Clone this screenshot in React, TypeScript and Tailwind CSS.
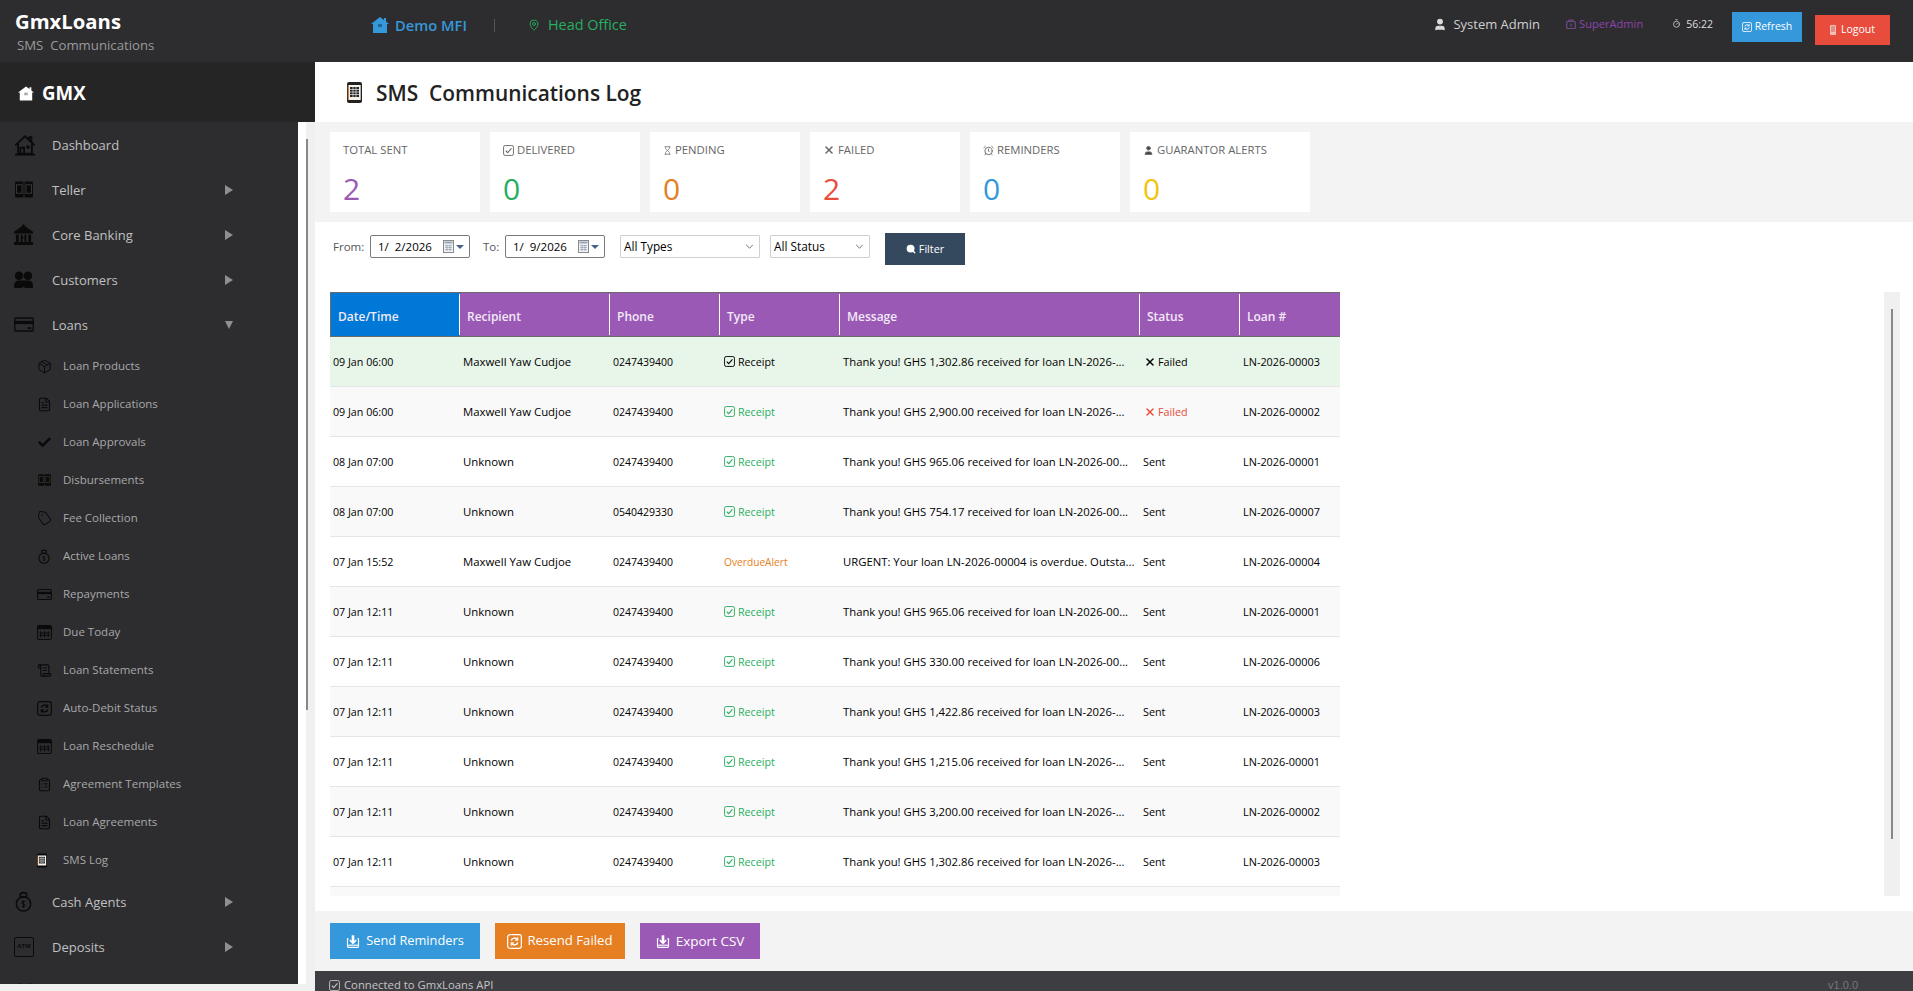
import React from "react";
import { Package, FileText, Check, Tag, ScrollText, ClipboardList, X, User, MapPin, Search, Hourglass, AlarmClock, Timer } from "lucide-react";

const FONT = "font-['Open_Sans','Noto_Sans',sans-serif]";

function CheckBox({ className = "" }: { className?: string }) {
  return (
    <svg viewBox="0 0 12 12" className={className} fill="none" stroke="currentColor">
      <rect x="0.600" y="0.600" width="10.800" height="10.800" rx="1.800" strokeWidth="1" />
      <path d="M3 6.200l2.100 2.100L9.200 3.800" strokeWidth="1.200" />
    </svg>
  );
}
function HomeOutline({ className = "" }: { className?: string }) {
  return (
    <svg viewBox="0 0 24 24" className={className} fill="none" stroke="currentColor" strokeWidth="2">
      <path d="M1.500 12.500 12 2.500l10.500 10" />
      <path d="M16.500 6V3.500h2.500v5" />
      <path d="M4.500 11v10.500h15V11" />
      <path d="M7 22v-7h4v7" />
      <rect x="13.500" y="12.500" width="3.500" height="3.500" fill="currentColor" stroke="none" />
      <path d="M1 22.500h22" />
    </svg>
  );
}
function HomeSolid({ className = "" }: { className?: string }) {
  return (
    <svg viewBox="0 0 18 16" className={className} fill="currentColor">
      <path d="M9 0 0 7h2v9h14V7h2l-3-2.400V1h-2v2z" />
      <rect x="7" y="7" width="4" height="3" fill="#00000055" />
    </svg>
  );
}
function TellerIcon({ className = "" }: { className?: string }) {
  return (
    <svg viewBox="0 0 20 18" className={className} fill="none">
      <rect x="0.500" y="0.500" width="9" height="17" rx="1" fill="#0a0a0a" />
      <rect x="10.500" y="0.500" width="9" height="17" rx="1" fill="#0a0a0a" />
      <rect x="2" y="4" width="6" height="9" fill="none" stroke="#3a3a3a" />
      <rect x="12" y="4" width="6" height="9" fill="none" stroke="#3a3a3a" />
    </svg>
  );
}
function BankIcon({ className = "" }: { className?: string }) {
  return (
    <svg viewBox="0 0 20 22" className={className} fill="currentColor">
      <path d="M10 0l2 2.500L20 8v2H0V8l8-5.500z" />
      <path d="M2 11h3v8H2zM7 11h2v3H7zM11 11h2v3h-2zM15 11h3v8h-3zM7 14h6v1H7zM7 15h2v4H7zM11 15h2v4h-2z" />
      <rect x="0" y="19" width="20" height="3" />
    </svg>
  );
}
function PeopleIcon({ className = "" }: { className?: string }) {
  return (
    <svg viewBox="0 0 20 18" className={className} fill="currentColor">
      <circle cx="5.300" cy="5" r="4.500" />
      <circle cx="14.700" cy="5" r="4.500" />
      <path d="M0 18v-3c0-3 2-5 5-5h10c3 0 5 2 5 5v3h-9v-1H9v1z" />
    </svg>
  );
}
function CardIcon({ className = "" }: { className?: string }) {
  return (
    <svg viewBox="0 0 22 16" className={className} fill="none" stroke="currentColor" strokeWidth="1.500">
      <rect x="0.800" y="0.800" width="20.400" height="14.400" rx="1.500" />
      <rect x="1" y="4" width="20" height="3.500" fill="currentColor" stroke="none" />
      <rect x="15" y="11" width="4" height="2" fill="currentColor" stroke="none" />
    </svg>
  );
}
function BagIcon({ className = "" }: { className?: string }) {
  return (
    <svg viewBox="0 0 20 22" className={className} fill="none" stroke="currentColor" strokeWidth="1.600">
      <circle cx="10" cy="13.500" r="7.500" />
      <path d="M7 6.500 6.500 3c2-1.500 5-1.500 7 0L13 6.500" />
      <path d="M7 6.500h6" />
      <path d="M12 11.500c-1-1-4-1-4 .8 0 2 4 1 4 3 0 1.800-3 1.800-4 .8M10 10v7.500" strokeWidth="1" />
    </svg>
  );
}
function CalIcon({ className = "" }: { className?: string }) {
  return (
    <svg viewBox="0 0 16 16" className={className} fill="none" stroke="#0a0a0a" strokeWidth="1.100">
      <rect x="0.600" y="0.600" width="14.800" height="14.800" rx="1.500" />
      <rect x="1" y="1" width="14" height="3.500" fill="#0a0a0a" stroke="none" />
      <path d="M4 6.500v7M8 6.500v7M12 6.500v7M2.500 8.500h11M2.500 11h11" strokeWidth="1" />
    </svg>
  );
}
function RefreshBox({ className = "" }: { className?: string }) {
  return (
    <svg viewBox="0 0 16 16" className={className} fill="none" stroke="currentColor" strokeWidth="1.300">
      <rect x="0.700" y="0.700" width="14.600" height="14.600" rx="2.500" />
      <path d="M4.500 7a3.700 3.700 0 0 1 6.500-1.200M11.500 9a3.700 3.700 0 0 1-6.500 1.200" strokeWidth="1.600" />
      <path d="M11.500 3.500v3h-3M4.500 12.500v-3h3" strokeWidth="1.200" />
    </svg>
  );
}
function PhoneGrid({ className = "", body = "#0a0a0a" }: { className?: string; body?: string }) {
  return (
    <svg viewBox="0 0 15 21" className={className}>
      <rect x="0" y="0" width="15" height="21" rx="2" fill={body} />
      <rect x="1.300" y="3" width="12.400" height="15" fill="#f5f0ea" />
      <path d="M1.200 3v15" stroke="#c8641e" strokeWidth="0.900" />
      <path d="M3 5h9v10H3z" fill="#222" />
      <path d="M6 5v10M9 5v10M3 7.500h9M3 10h9M3 12.500h9" stroke="#eee" strokeWidth="0.700" />
    </svg>
  );
}
function InboxUp({ className = "" }: { className?: string }) {
  return (
    <svg viewBox="0 0 16 16" className={className} fill="none" stroke="currentColor" strokeWidth="1.300">
      <path d="M3 5.500H1.700v8.800c0 .6.400 1 1 1h10.600c.6 0 1-.4 1-1V5.500H13" />
      <path d="M1.700 12.800h12.600" />
      <path d="M8 10.500V1.500" strokeWidth="3" />
      <path d="M4.500 7l3.500 3.500L11.500 7" strokeWidth="1.800" />
    </svg>
  );
}
function DateBox({ value, className }: { value: string; className: string }) {
  return (
    <div className={`flex h-[23px] items-center rounded-[2px] border border-[#7a7a7a] bg-white pl-[7px] text-[11.500px] text-black ${className}`}>
      <span className="whitespace-pre">{value}</span>
      <svg viewBox="0 0 12 14" className="ml-[11px] h-[14px] w-[12px]">
        <rect x="0.500" y="0.500" width="10" height="12" fill="#eef1f5" stroke="#8a8a8a" />
        <rect x="1.500" y="1.500" width="8" height="2" fill="#9aa7b8" />
        <path d="M2 5.500h7M2 7.500h7M2 9.500h7M4 5v6M7 5v6" stroke="#8a96a6" strokeWidth="0.600" />
      </svg>
      <svg viewBox="0 0 8 4" className="ml-[1px] h-[4px] w-[8px]">
        <path d="M0 0h8L4 4z" fill="#47618a" />
      </svg>
    </div>
  );
}
function SelectBox({ label, className }: { label: string; className: string }) {
  return (
    <div className={`flex h-[23px] items-center justify-between rounded-[1px] border border-[#d0d0d0] bg-white pl-[3px] pr-[5px] text-[11.800px] text-black ${className}`}>
      <span>{label}</span>
      <svg viewBox="0 0 10 6" className="h-[5px] w-[9px]" fill="none" stroke="#555" strokeWidth="1">
        <path d="M1 1l4 4 4-4" />
      </svg>
    </div>
  );
}

type Top = { label: string; icon: React.ReactNode; arrow?: "right" | "down" };
const i22 = "h-[22px] w-[22px] text-[#0a0a0a]";
const topA: Top[] = [
  { label: "Dashboard", icon: <HomeOutline className={i22} /> },
  { label: "Teller", icon: <TellerIcon className="h-[17px] w-[20px]" />, arrow: "right" },
  { label: "Core Banking", icon: <BankIcon className="h-[21px] w-[19px] text-[#0a0a0a]" />, arrow: "right" },
  { label: "Customers", icon: <PeopleIcon className="h-[17px] w-[19px] text-[#0a0a0a]" />, arrow: "right" },
  { label: "Loans", icon: <CardIcon className="h-[15px] w-[20px] text-[#0a0a0a]" />, arrow: "down" },
];
const s = "h-[15px] w-[15px] text-[#0a0a0a]";
const subs: { label: string; icon: React.ReactNode }[] = [
  { label: "Loan Products", icon: <Package className={s} strokeWidth={1.600} /> },
  { label: "Loan Applications", icon: <FileText className={s} strokeWidth={1.800} /> },
  { label: "Loan Approvals", icon: <Check className={s} strokeWidth={4} /> },
  { label: "Disbursements", icon: <TellerIcon className="h-[12px] w-[15px]" /> },
  { label: "Fee Collection", icon: <Tag className="h-[15px] w-[15px] rotate-[10deg] text-[#0a0a0a]" strokeWidth={1.500} /> },
  { label: "Active Loans", icon: <BagIcon className="h-[15px] w-[14px] text-[#0a0a0a]" /> },
  { label: "Repayments", icon: <CardIcon className="h-[11px] w-[15px] text-[#0a0a0a]" /> },
  { label: "Due Today", icon: <CalIcon className="h-[15px] w-[15px]" /> },
  { label: "Loan Statements", icon: <ScrollText className={s} strokeWidth={1.700} /> },
  { label: "Auto-Debit Status", icon: <RefreshBox className="h-[15px] w-[15px] text-[#0a0a0a]" /> },
  { label: "Loan Reschedule", icon: <CalIcon className="h-[15px] w-[15px]" /> },
  { label: "Agreement Templates", icon: <ClipboardList className={s} strokeWidth={1.800} /> },
  { label: "Loan Agreements", icon: <FileText className={s} strokeWidth={1.800} /> },
  { label: "SMS Log", icon: <PhoneGrid className="h-[15px] w-[10px]" /> },
];

function TopItem({ item }: { item: Top }) {
  return (
    <div className="flex h-[45px] shrink-0 items-center text-[13px] text-[#c0c0c0]">
      <div className="flex w-[52px] items-center justify-start pl-[14px]">{item.icon}</div>
      <span className="w-[173px] pt-[2px]">{item.label}</span>
      {item.arrow === "right" && <span className="h-0 w-0 border-y-[5px] border-l-[8px] border-y-transparent border-l-[#8f8f8f]" />}
      {item.arrow === "down" && <span className="h-0 w-0 border-x-[4px] border-t-[8px] border-x-transparent border-t-[#8f8f8f]" />}
    </div>
  );
}

const stats = [
  { label: "TOTAL SENT", value: "2", color: "text-[#9b59b6]", w: "w-[150px]" },
  { label: "DELIVERED", value: "0", color: "text-[#27ae60]", w: "w-[150px]", icon: <CheckBox className="h-[11px] w-[11px]" /> },
  { label: "PENDING", value: "0", color: "text-[#e67e22]", w: "w-[150px]", icon: <Hourglass className="h-[11px] w-[9px]" strokeWidth={1.800} /> },
  { label: "FAILED", value: "2", color: "text-[#e74c3c]", w: "w-[150px]", icon: <X className="h-[12px] w-[12px]" strokeWidth={3} /> },
  { label: "REMINDERS", value: "0", color: "text-[#3498db]", w: "w-[150px]", icon: <AlarmClock className="h-[11px] w-[11px]" strokeWidth={2} /> },
  { label: "GUARANTOR ALERTS", value: "0", color: "text-[#f1c40f]", w: "w-[180px]", icon: <User className="h-[11px] w-[11px] fill-[#444]" strokeWidth={2} /> },
];

const cols = [
  { h: "Date/Time", w: "w-[129px]" },
  { h: "Recipient", w: "w-[150px]" },
  { h: "Phone", w: "w-[110px]" },
  { h: "Type", w: "w-[120px]" },
  { h: "Message", w: "w-[300px]" },
  { h: "Status", w: "w-[100px]" },
  { h: "Loan #", w: "w-[100px]" },
];

const MX = "Maxwell Yaw Cudjoe";
const rows = [
  ["09 Jan 06:00", MX, "0247439400", "Receipt", "Thank you! GHS 1,302.86 received for loan LN-2026-...", "Failed", "LN-2026-00003"],
  ["09 Jan 06:00", MX, "0247439400", "Receipt", "Thank you! GHS 2,900.00 received for loan LN-2026-...", "Failed", "LN-2026-00002"],
  ["08 Jan 07:00", "Unknown", "0247439400", "Receipt", "Thank you! GHS 965.06 received for loan LN-2026-00...", "Sent", "LN-2026-00001"],
  ["08 Jan 07:00", "Unknown", "0540429330", "Receipt", "Thank you! GHS 754.17 received for loan LN-2026-00...", "Sent", "LN-2026-00007"],
  ["07 Jan 15:52", MX, "0247439400", "OverdueAlert", "URGENT: Your loan LN-2026-00004 is overdue. Outsta...", "Sent", "LN-2026-00004"],
  ["07 Jan 12:11", "Unknown", "0247439400", "Receipt", "Thank you! GHS 965.06 received for loan LN-2026-00...", "Sent", "LN-2026-00001"],
  ["07 Jan 12:11", "Unknown", "0247439400", "Receipt", "Thank you! GHS 330.00 received for loan LN-2026-00...", "Sent", "LN-2026-00006"],
  ["07 Jan 12:11", "Unknown", "0247439400", "Receipt", "Thank you! GHS 1,422.86 received for loan LN-2026-...", "Sent", "LN-2026-00003"],
  ["07 Jan 12:11", "Unknown", "0247439400", "Receipt", "Thank you! GHS 1,215.06 received for loan LN-2026-...", "Sent", "LN-2026-00001"],
  ["07 Jan 12:11", "Unknown", "0247439400", "Receipt", "Thank you! GHS 3,200.00 received for loan LN-2026-...", "Sent", "LN-2026-00002"],
  ["07 Jan 12:11", "Unknown", "0247439400", "Receipt", "Thank you! GHS 1,302.86 received for loan LN-2026-...", "Sent", "LN-2026-00003"],
];

export default function App() {
  return (
    <div className={`flex h-screen w-screen flex-col overflow-hidden bg-white ${FONT}`}>
      <header className="flex h-[62px] shrink-0 bg-[#2d2d30]">
        <div className="w-[371px] shrink-0 pl-[15px]">
          <div className="mt-[8px] text-[20.300px] font-bold leading-[27px] text-white">GmxLoans</div>
          <div className="pl-[2px] text-[13.200px] leading-[20px] whitespace-pre text-[#9a9a9a]">SMS  Communications</div>
        </div>
        <div className="flex h-[50px] items-center">
          <HomeSolid className="h-[16px] w-[18px] text-[#3498db]" />
          <span className="ml-[6px] w-[74px] text-[14.700px] font-semibold text-[#3498db]">Demo MFI</span>
          <span className="ml-[25px] h-[13px] w-px bg-[#555]" />
          <MapPin className="ml-[33px] h-[16px] w-[12px] text-[#27ae60]" strokeWidth={1.800} />
          <span className="ml-[8px] text-[14.400px] text-[#27ae60]">Head Office</span>
        </div>
        <div className="ml-auto flex h-[50px] items-start pr-[23px]">
          <User className="mt-[17px] h-[15px] w-[14px] fill-[#ddd] text-[#ddd]" />
          <span className="ml-[6px] mt-[14px] text-[13px] leading-[20px] text-[#cfcfcf]">System Admin</span>
          <svg viewBox="0 0 10 10" className="ml-[26px] mt-[19px] h-[10px] w-[10px]" fill="none" stroke="#6f4a85" strokeWidth="1.200">
            <rect x="0.700" y="2.500" width="8.600" height="7" rx="1" />
            <path d="M3 2.500V1h4v1.500M5 4.500v3" />
          </svg>
          <span className="ml-[3px] mt-[15px] text-[11.100px] leading-[18px] text-[#8e44ad]">SuperAdmin</span>
          <Timer className="ml-[29px] mt-[19px] h-[9px] w-[9px] text-[#bbb]" strokeWidth={2.500} />
          <span className="ml-[5px] mt-[15px] text-[10.500px] leading-[18px] text-[#dddddd]">56:22</span>
          <button className="ml-[19px] mt-[12px] flex h-[30px] w-[70px] items-center justify-center gap-[3px] bg-[#3498db] text-[10.500px] text-white">
            <RefreshBox className="h-[10px] w-[10px]" />
            Refresh
          </button>
          <button className="ml-[13px] mt-[15px] flex h-[30px] w-[75px] items-center justify-center gap-[5px] bg-[#e74c3c] text-[10.500px] text-white">
            <svg viewBox="0 0 6 10" className="h-[10px] w-[6px]"><rect width="6" height="10" rx="1" fill="#f6c0b8" /><path d="M1 2h4M1 4h4M1 6h4" stroke="#c0392b" strokeWidth="0.700" /></svg>
            Logout
          </button>
        </div>
      </header>

      <div className="flex min-h-0 flex-1">
        <aside className="flex w-[315px] shrink-0 flex-col bg-[#f0f0f0]">
          <div className="flex h-[60px] shrink-0 items-center gap-[8px] bg-[#252526] pl-[18px] pt-[2px]">
            <HomeSolid className="h-[15px] w-[16px] text-white" />
            <span className="text-[18.700px] font-bold text-white">GMX</span>
          </div>
          <div className="flex min-h-0 flex-1">
            <nav className="flex h-[862px] w-[298px] shrink-0 flex-col overflow-hidden bg-[#2d2d30]">
              {topA.map((t) => (
                <TopItem key={t.label} item={t} />
              ))}
              {subs.map((x) => (
                <div key={x.label} className="flex h-[38px] shrink-0 items-center text-[11.500px] text-[#a8a8a8]">
                  <div className="flex w-[63px] items-center justify-start pl-[37px]">{x.icon}</div>
                  <span>{x.label}</span>
                </div>
              ))}
              <TopItem item={{ label: "Cash Agents", icon: <BagIcon className="h-[21px] w-[19px] text-[#0a0a0a]" />, arrow: "right" }} />
              <TopItem
                item={{
                  label: "Deposits",
                  icon: (
                    <span className="flex h-[20px] w-[20px] items-center justify-center rounded-[2px] border border-[#0a0a0a] text-[6px] font-bold text-[#0a0a0a]">
                      ATM
                    </span>
                  ),
                  arrow: "right",
                }}
              />
              <div className="flex h-[45px] shrink-0 items-center pl-[15px]">
                <PeopleIcon className="h-[20px] w-[20px] text-[#0a0a0a]" />
              </div>
            </nav>
            <div className="h-[862px] w-[8px] shrink-0 bg-white" />
            <div className="w-[9px] shrink-0 pt-[17px]">
              <div className="h-[571px] w-[2px] bg-[#888]" />
            </div>
          </div>
        </aside>

        <main className="flex min-w-0 flex-1 flex-col">
          <div className="flex h-[60px] shrink-0 items-center bg-white pl-[32px]">
            <PhoneGrid className="h-[21px] w-[15px]" body="#222" />
            <h1 className="ml-[14px] pt-[3px] text-[20.900px] font-semibold whitespace-pre text-[#222]">SMS  Communications Log</h1>
          </div>

          <div className="flex h-[100px] shrink-0 gap-[10px] bg-[#f3f3f3] px-[15px] py-[10px]">
            {stats.map((c) => (
              <div key={c.label} className={`${c.w} bg-white px-[13px] pt-[9px]`}>
                <div className="flex h-[18px] items-center gap-[3px] text-[11.300px] text-[#666]">
                  {c.icon}
                  {c.label}
                </div>
                <div className={`mt-[8px] text-[30px] font-medium leading-[44px] ${c.color}`}>{c.value}</div>
              </div>
            ))}
          </div>

          <section className="flex min-h-0 flex-1 flex-col bg-white">
            <div className="flex h-[43px] shrink-0 items-start pl-[18px] pt-[11px]">
              <span className="mt-[5px] w-[37px] text-[11.500px] text-[#555]">From:</span>
              <DateBox value="1/  2/2026" className="mt-[2px] w-[100px]" />
              <span className="ml-[13px] mt-[5px] w-[22px] text-[11.500px] text-[#555]">To:</span>
              <DateBox value="1/  9/2026" className="mt-[2px] w-[100px]" />
              <SelectBox label="All Types" className="ml-[15px] mt-[2px] w-[140px]" />
              <SelectBox label="All Status" className="ml-[10px] mt-[2px] w-[100px]" />
              <button className="ml-[15px] flex h-[32px] w-[80px] items-center justify-center gap-[3px] bg-[#34495e] text-[10.800px] text-white">
                <Search className="h-[10px] w-[10px] fill-white" strokeWidth={3} />
                Filter
              </button>
            </div>

            <div className="flex pl-[15px] pr-[13px] pt-[27px]">
              <div className="h-[604px] w-[1010px] overflow-hidden">
                <div className="flex h-[45px] border-y border-l border-[#6b6b6b]">
                  {cols.map((c, i) => (
                    <div
                      key={c.h}
                      className={`relative flex items-center pl-[7px] pt-[4px] text-[12px] font-semibold text-[#f2eaf6] ${c.w} ${i === 0 ? "bg-[#0078d7]" : "bg-[#9b59b6]"}`}
                    >
                      {c.h}
                      {i < 6 && <span className="absolute bottom-[1px] right-0 top-[1px] w-px bg-white" />}
                    </div>
                  ))}
                </div>
                {rows.map((r, i) => {
                  const green = i === 0;
                  return (
                    <div
                      key={i}
                      className={`flex h-[50px] items-center border-b border-[#e6e6e6] pt-[1px] text-[10.500px] text-black ${green ? "bg-[#e8f5e9]" : i % 2 ? "bg-[#f9f9f9]" : "bg-white"}`}
                    >
                      <div className="w-[130px] pl-[3px] text-[10.700px]">{r[0]}</div>
                      <div className="w-[150px] pl-[3px] text-[11.400px]">{r[1]}</div>
                      <div className="w-[110px] pl-[3px] pt-[1px]">{r[2]}</div>
                      <div className={`flex w-[120px] items-center gap-[3px] pl-[4px] ${r[3] === "Receipt" ? "text-[10.700px]" : "pt-[1px] text-[10.200px]"} ${green ? "text-black" : r[3] === "Receipt" ? "text-[#27ae60]" : "text-[#e67e22]"}`}>
                        {r[3] === "Receipt" && <CheckBox className="h-[11px] w-[11px]" />}
                        {r[3]}
                      </div>
                      <div className="w-[300px] pl-[3px] text-[11.300px] whitespace-nowrap">{r[4]}</div>
                      {r[5] === "Failed" ? (
                        <div className={`flex w-[100px] items-center gap-[2px] pl-[4px] text-[10.800px] ${green ? "text-black" : "text-[#e74c3c]"}`}>
                          <X className="h-[12px] w-[12px]" strokeWidth={3} />
                          Failed
                        </div>
                      ) : (
                        <div className="w-[100px] pl-[3px] text-[10.800px]">Sent</div>
                      )}
                      <div className="w-[100px] pl-[3px] text-[10.900px]">{r[6]}</div>
                    </div>
                  );
                })}
                <div className="h-[10px] bg-[#f9f9f9]" />
              </div>
              <div className="ml-auto flex h-[604px] w-[16px] justify-center bg-[#f0f0f0] pt-[17px]">
                <div className="h-[530px] w-[2px] bg-[#888]" />
              </div>
            </div>
          </section>

          <div className="flex h-[60px] shrink-0 gap-[15px] bg-[#f3f3f3] px-[15px] pt-[12px]">
            <button className="flex h-[36px] w-[150px] items-center justify-center gap-[6px] bg-[#3498db] text-[12.800px] text-white">
              <InboxUp className="h-[14px] w-[14px]" />
              Send Reminders
            </button>
            <button className="flex h-[36px] w-[130px] items-center justify-center gap-[5px] bg-[#e67e22] text-[13.200px] text-white">
              <RefreshBox className="h-[15px] w-[15px]" />
              Resend Failed
            </button>
            <button className="flex h-[36px] w-[120px] items-center justify-center gap-[6px] bg-[#9b59b6] text-[13.500px] text-white">
              <InboxUp className="h-[14px] w-[14px]" />
              Export CSV
            </button>
          </div>

          <footer className="flex h-[20px] shrink-0 items-start justify-between overflow-hidden bg-[#3e3e42] pl-[14px] pr-[55px] pt-[5px]">
            <div className="flex items-center gap-[4px] text-[11.300px] leading-[18px] text-[#c4c4c4]">
              <CheckBox className="h-[11px] w-[11px]" />
              Connected to GmxLoans API
            </div>
            <span className="font-['Liberation_Sans',sans-serif] text-[11px] leading-[18px] text-[#777]">v1.0.0</span>
          </footer>
        </main>
      </div>
    </div>
  );
}
